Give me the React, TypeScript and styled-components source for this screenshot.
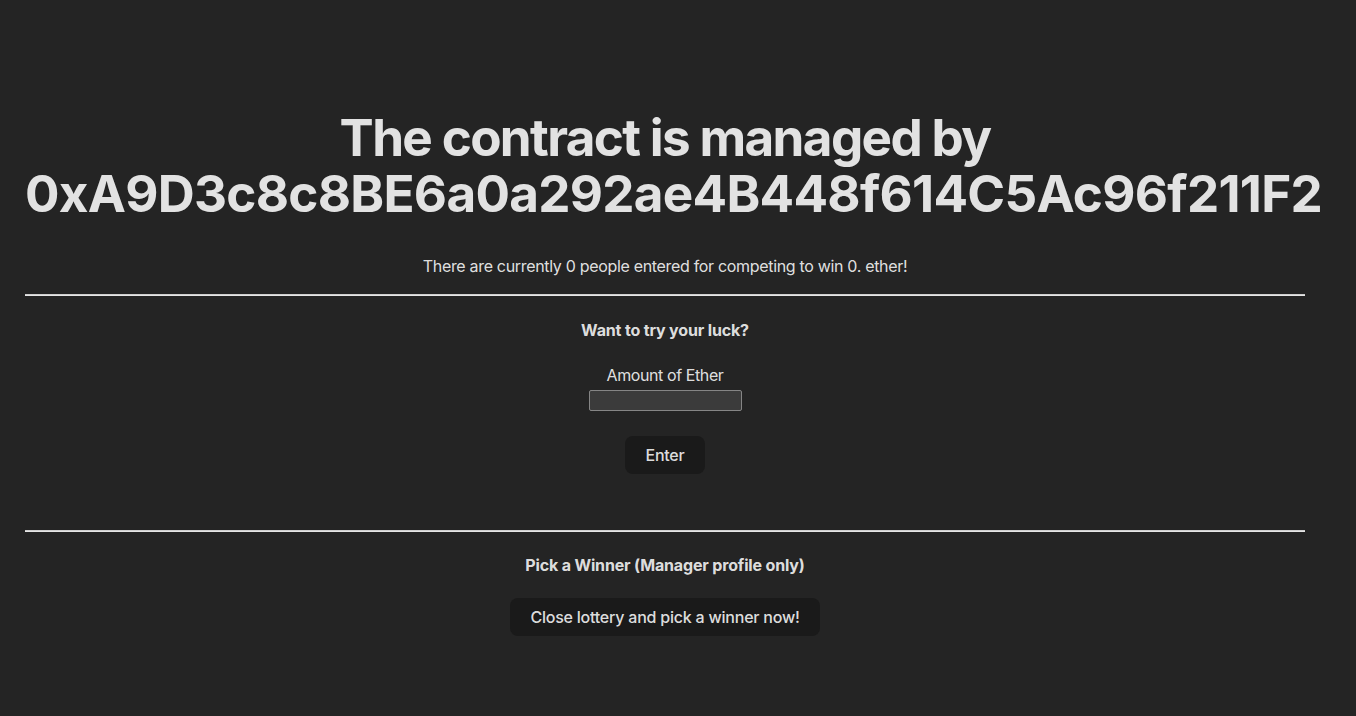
import React from "react";
import styled, { createGlobalStyle } from "styled-components";

const Global = createGlobalStyle`
  html, body {
    margin: 0;
    padding: 0;
    background: #242424;
  }
  body {
    font-family: Inter, "Noto Sans", "Liberation Sans", sans-serif;
    color: rgba(255, 255, 255, 0.87);
    line-height: 1.5;
    font-weight: 400;
    -webkit-font-smoothing: antialiased;
  }
`;

const Page = styled.div`
  min-height: 716px;
  box-sizing: border-box;
  padding: 75px 0 40px 25px;
`;

const Container = styled.div`
  width: 1280px;
  text-align: center;
`;

const Title = styled.h1`
  font-size: 51.2px;
  line-height: 1.1;
  font-weight: 700;
  margin: 34px 0 32px;
`;

const TitleLine = styled.span<{ $spacing: number }>`
  display: block;
  white-space: nowrap;
  letter-spacing: ${(p) => p.$spacing}px;
`;

const Text = styled.p`
  font-size: 16px;
  letter-spacing: -0.32px;
  margin: 0 0 16px;
`;

const Rule = styled.hr`
  margin: 0;
  height: 0;
  border: none;
  border-top: 1px solid #cfcfcf;
  border-bottom: 1px solid #e6e6e6;
`;

const Section = styled.section<{ $top: number; $bottom: number }>`
  display: flex;
  flex-direction: column;
  align-items: center;
  padding-top: ${(p) => p.$top}px;
  padding-bottom: ${(p) => p.$bottom}px;
`;

const Heading = styled.h4`
  font-size: 16px;
  font-weight: 700;
  letter-spacing: -0.16px;
  margin: 21px 0 21px;
`;

const Field = styled.div`
  display: flex;
  flex-direction: column;
  align-items: center;
  gap: 3px;
  margin-bottom: 25px;
`;

const Label = styled.label`
  font-size: 16px;
  line-height: 24px;
  letter-spacing: -0.4px;
`;

const Input = styled.input`
  box-sizing: border-box;
  width: 153px;
  height: 21px;
  background: #3b3b3b;
  border: 1px solid #858585;
  border-radius: 2px;
  color: inherit;
  padding: 0 4px;
  outline: none;
`;

const Button = styled.button`
  box-sizing: border-box;
  height: 38px;
  padding: 0 20px;
  border: none;
  border-radius: 8px;
  background: #1a1a1a;
  color: rgba(255, 255, 255, 0.87);
  font-family: inherit;
  font-size: 16px;
  font-weight: 500;
  letter-spacing: -0.22px;
  line-height: 38px;
  cursor: pointer;
`;

export default function App() {
  return (
    <>
      <Global />
      <Page>
        <Container>
          <Title>
            <TitleLine $spacing={-1.65}>The contract is managed by</TitleLine>
            <TitleLine $spacing={-0.72}>0xA9D3c8c8BE6a0a292ae4B448f614C5Ac96f211F2</TitleLine>
          </Title>
          <Text>There are currently 0 people entered for competing to win 0. ether!</Text>
          <Rule />
          <Section $top={1} $bottom={56}>
            <Heading>Want to try your luck?</Heading>
            <Field>
              <Label htmlFor="amount">Amount of Ether</Label>
              <Input id="amount" />
            </Field>
            <Button>Enter</Button>
          </Section>
          <Rule />
          <Section $top={0} $bottom={0}>
            <Heading>Pick a Winner (Manager profile only)</Heading>
            <Button>Close lottery and pick a winner now!</Button>
          </Section>
        </Container>
      </Page>
    </>
  );
}
